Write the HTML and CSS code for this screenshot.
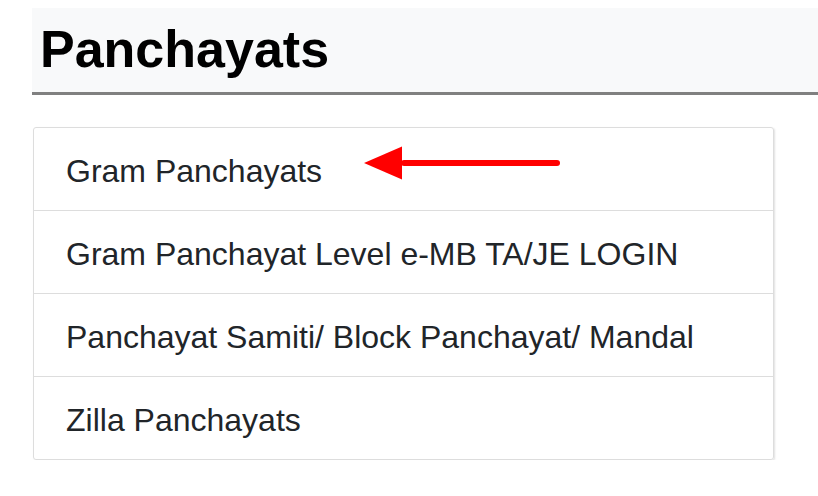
FILE: index.html
```html
<!DOCTYPE html>
<html lang="en">
<head>
<meta charset="utf-8">
<title>Panchayats</title>
<link rel="stylesheet" href="styles.css">
</head>
<body>
<div class="page">
  <h1 class="title">Panchayats</h1>
  <div class="list-wrap">
    <ul class="list-group">
      <li class="list-item">Gram Panchayats</li>
      <li class="list-item">Gram Panchayat Level e-MB TA/JE LOGIN</li>
      <li class="list-item">Panchayat Samiti/ Block Panchayat/ Mandal</li>
      <li class="list-item">Zilla Panchayats</li>
    </ul>
    <svg class="arrow" width="200" height="40" viewBox="0 0 200 40" aria-hidden="true">
      <line x1="40" y1="20" x2="193" y2="20" stroke="#ff0000" stroke-width="6" stroke-linecap="round"/>
      <polygon points="0,20 38,3.5 38,36.5" fill="#ff0000"/>
    </svg>
  </div>
</div>
</body>
</html>
```

FILE: styles.css
```css
html, body {
  margin: 0;
  padding: 0;
  background: #ffffff;
}

body {
  font-family: "Liberation Sans", Arial, Helvetica, sans-serif;
  color: #212529;
}

.page {
  padding: 8px 0 0 32px;
}

.title {
  margin: 0;
  padding: 10px 8px 12px;
  font-size: 52px;
  line-height: 62px;
  font-weight: 700;
  color: #000000;
  background: #f8f9fa;
  border-bottom: 3px solid #808080;
}

.list-wrap {
  position: relative;
  margin: 32px 0 0 1px;
  width: 741px;
}

.list-group {
  list-style: none;
  margin: 0;
  padding: 0;
  border: 1px solid #dddddd;
  border-radius: 3px;
  box-shadow: 1px 1px 2px rgba(0, 0, 0, 0.12);
}

.list-item {
  height: 82px;
  box-sizing: border-box;
  padding: 19px 32px 15px;
  font-size: 32px;
  line-height: 48px;
  color: #212529;
}

.list-item + .list-item {
  border-top: 1px solid #dddddd;
  height: 83px;
}

.arrow {
  position: absolute;
  left: 331px;
  top: 16px;
}
```
